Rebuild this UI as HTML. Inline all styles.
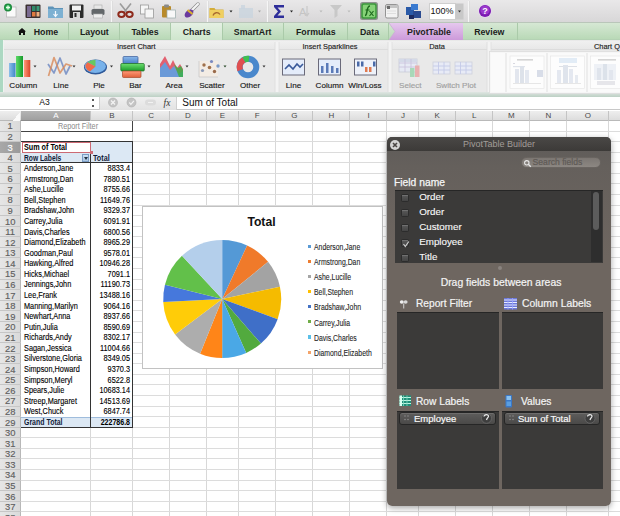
<!DOCTYPE html><html><head><meta charset="utf-8"><style>
*{margin:0;padding:0;box-sizing:border-box}
html,body{width:620px;height:516px;overflow:hidden;background:#fff;font-family:"Liberation Sans", sans-serif;position:relative}
.abs{position:absolute}
.t{position:absolute;white-space:nowrap;line-height:1}
</style></head><body>

<div class="abs" style="left:0px;top:0px;width:620px;height:23px;background:linear-gradient(#e9e8e9,#d8d7d8);border-bottom:1px solid #b9c6b9"></div>
<svg class="abs" style="left:0;top:0" width="620" height="23" viewBox="0 0 620 23">
<!-- new -->
<rect x="6.5" y="7" width="9.5" height="10" fill="#fafafa" stroke="#b8b8b8" stroke-width="0.8"/>
<circle cx="8" cy="7.5" r="4" fill="#1d8a3c"/><circle cx="8" cy="7.5" r="2.6" fill="#2fb35a"/>
<path d="M8 5.5v4M6 7.5h4" stroke="#e8ffe8" stroke-width="1.3"/>
<!-- templates -->
<rect x="25.5" y="4.5" width="15" height="13.5" rx="1" fill="#3a3030"/>
<rect x="27" y="6" width="4" height="11" fill="#7a6a90"/>
<rect x="32" y="6" width="3.5" height="5" fill="#2f8a6a"/><rect x="36.5" y="6" width="3" height="5" fill="#3a9a7a"/>
<rect x="32" y="12" width="3.5" height="4.5" fill="#e07a40"/><rect x="36.5" y="12" width="3" height="4.5" fill="#f0b080"/>
<!-- open -->
<path d="M48 6.5h5l1.5 1.5h8.5v10h-15z" fill="#5e93b8"/>
<rect x="48" y="9" width="15" height="9" fill="#7db0d2"/>
<path d="M55.5 11v5M53.5 14l2 2.5 2-2.5" stroke="#f4f8ff" stroke-width="1.2" fill="none"/>
<!-- save -->
<rect x="69.5" y="4.5" width="14" height="13.5" rx="1" fill="#2b2b2b"/>
<rect x="72" y="5.5" width="9" height="5" fill="#f2f2f2"/>
<rect x="73" y="12" width="7" height="6" fill="#d8d8d8"/><rect x="74.5" y="13" width="2" height="4" fill="#2b2b2b"/>
<!-- print -->
<rect x="94" y="5" width="8" height="4" fill="#e8e8e8" stroke="#aaa" stroke-width=".6"/>
<rect x="91.5" y="9" width="13" height="6" rx="1.5" fill="#63676a"/>
<rect x="93.5" y="14" width="9" height="4" fill="#eee" stroke="#aaa" stroke-width=".6"/>
<line x1="111.5" y1="1" x2="111.5" y2="22" stroke="#f6f6f6" stroke-width="1.2"/><line x1="112.5" y1="1" x2="112.5" y2="22" stroke="#d6d6d6" stroke-width=".6"/>
<!-- cut -->
<path d="M120 3.5l7.5 9.5M131 3.5l-7.5 9.5" stroke="#9c9c9c" stroke-width="1.6"/>
<ellipse cx="121.5" cy="14.3" rx="3.2" ry="2.6" fill="none" stroke="#8e2a1c" stroke-width="2"/>
<ellipse cx="129.5" cy="14.3" rx="3.2" ry="2.6" fill="none" stroke="#8e2a1c" stroke-width="2"/>
<!-- copy -->
<rect x="140.5" y="5" width="8" height="9" fill="#f6f6f6" stroke="#9a9a9a" stroke-width=".8"/>
<rect x="145" y="9" width="8.5" height="9" fill="#f6f6f6" stroke="#9a9a9a" stroke-width=".8"/>
<!-- paste -->
<rect x="162" y="6" width="9" height="11.5" rx="1" fill="#b88a2a"/>
<rect x="164" y="4.5" width="5" height="3" rx="1" fill="#8a8a8a"/>
<rect x="167" y="10" width="8.5" height="8" fill="#f8f8f8" stroke="#9aa" stroke-width=".7"/>
<!-- brush -->
<path d="M192 10l6-6" stroke="#8a8a8a" stroke-width="3.4" stroke-linecap="round"/>
<path d="M192 10l6-6" stroke="#f4f4f4" stroke-width="2.2" stroke-linecap="round"/>
<ellipse cx="189" cy="13.5" rx="5" ry="3.3" transform="rotate(-40 189 13.5)" fill="#6a3a9e"/>
<path d="M187.5 10l5 4" stroke="#d8b030" stroke-width="2.2"/>
<line x1="207.5" y1="1" x2="207.5" y2="22" stroke="#f6f6f6" stroke-width="1.2"/><line x1="208.5" y1="1" x2="208.5" y2="22" stroke="#d6d6d6" stroke-width=".6"/>
<!-- undo -->
<path d="M209.5 8h5l1 1.5h8v8.5h-14z" fill="#d4ad3a"/>
<rect x="209.5" y="10" width="14" height="8" fill="#f0cf60"/>
<path d="M213 15.5c1-3 5-4 7-1" stroke="#a86a30" stroke-width="1.3" fill="none"/>
<path d="M229.5 10.5h3l-1.5 2z" fill="#222"/>
<!-- redo grey -->
<rect x="239" y="8" width="14" height="10" fill="#c9d4de" opacity=".8"/>
<rect x="241" y="5" width="4" height="4" fill="#c9d4de" opacity=".8"/>
<path d="M258 10.5h3l-1.5 2z" fill="#aaa"/>
<line x1="267.5" y1="1" x2="267.5" y2="22" stroke="#f6f6f6" stroke-width="1.2"/><line x1="268.5" y1="1" x2="268.5" y2="22" stroke="#d6d6d6" stroke-width=".6"/>
<!-- sigma -->
<path d="M274 5h10v2.5h-6.5l3.5 4-3.5 4h6.5v2.5h-10v-2l4-4.5-4-4.5z" fill="#2e2e9a"/>
<path d="M290 10.5h3l-1.5 2z" fill="#222"/>
<!-- sort grey -->
<text x="299" y="16" font-size="11" fill="#c4c4c4" font-family="Liberation Sans">A</text>
<path d="M307 6v10M305 13l2 3 2-3" stroke="#c8c8c8" stroke-width="1.2" fill="none"/>
<path d="M319.5 10.5h3l-1.5 2z" fill="#bbb"/>
<!-- filter grey -->
<path d="M330 5h12l-4.5 5v6l-3 2v-8z" fill="#c8c8c8"/>
<path d="M347.5 10.5h3l-1.5 2z" fill="#bbb"/>
<!-- fx -->
<rect x="360" y="2" width="18" height="18" rx="2.5" fill="#8e948e"/>
<rect x="361.3" y="3.3" width="15.4" height="15.4" rx="1.8" fill="#3c9a3c"/>
<rect x="362.8" y="4.8" width="12.4" height="12.4" rx="1.2" fill="#86d278"/>
<path d="M365 15.5c1.5 0 1.5-1.5 2-4.5s1-5 3-5" stroke="#1e6a1e" stroke-width="1.5" fill="none"/>
<path d="M365.5 10h4" stroke="#1e6a1e" stroke-width="1.1"/>
<path d="M369.5 11l4 5M373.5 11l-4 5" stroke="#1e6a1e" stroke-width="1.2"/>
<!-- toolbox -->
<rect x="385.5" y="4.5" width="12.5" height="13.5" rx="1.5" fill="#f2f2f2" stroke="#8a8a8a" stroke-width=".9"/>
<rect x="386" y="5" width="11.5" height="3" fill="#c4c4c4"/>
<rect x="387" y="6" width="3" height="3" fill="#6a6a6a"/>
<path d="M387 11h9M387 13.5h9" stroke="#d0d0d0" stroke-width=".6"/>
<!-- media -->
<rect x="406" y="7" width="8" height="8" fill="#2a5aa8"/>
<rect x="411" y="4" width="7" height="6" fill="#3a7ad0"/>
<rect x="413" y="11" width="8" height="7" fill="#2a4a90"/>
<rect x="409" y="15" width="5" height="4" fill="#1c2a60"/>
<!-- zoom box -->
<rect x="429.5" y="3.5" width="26" height="16" fill="#fff" stroke="#cfcfcf"/>
<rect x="455.5" y="3.5" width="8" height="16" fill="#c8c8c8"/>
<path d="M458 10.5h3l-1.5 2z" fill="#333"/>
<line x1="468.5" y1="1" x2="468.5" y2="22" stroke="#f6f6f6" stroke-width="1.2"/><line x1="469.5" y1="1" x2="469.5" y2="22" stroke="#d6d6d6" stroke-width=".6"/>
<!-- help -->
<circle cx="485" cy="11" r="6.8" fill="#e6d8ee"/>
<circle cx="485" cy="11" r="6" fill="#7a1ab0"/>
<circle cx="485" cy="10" r="4.6" fill="#9a38cc"/>
</svg>
<div class="t" style="left:292.00px;width:300px;text-align:center;top:7.38px;font-size:9px;font-weight:normal;color:#111;">100%</div>
<div class="t" style="left:335.00px;width:300px;text-align:center;top:6.88px;font-size:9px;font-weight:bold;color:#fff;">?</div>
<div class="abs" style="left:0px;top:23px;width:620px;height:17px;background:linear-gradient(#d6e8d4,#b9d9b7);border-bottom:1px solid #b4d2b4"></div>
<div class="abs" style="left:7px;top:23px;width:61.5px;height:17px;border-right:1px solid #aacaa9"></div>
<div class="abs" style="left:68.5px;top:23px;width:51.5px;height:17px;border-right:1px solid #aacaa9"></div>
<div class="abs" style="left:120px;top:23px;width:51px;height:17px;border-right:1px solid #aacaa9"></div>
<div class="abs" style="left:171px;top:23px;width:52px;height:17px;background:linear-gradient(#e4f0e3,#cfe6cd);border-right:1px solid #aacaa9"></div>
<div class="abs" style="left:223px;top:23px;width:61px;height:17px;border-right:1px solid #aacaa9"></div>
<div class="abs" style="left:284px;top:23px;width:64px;height:17px;border-right:1px solid #aacaa9"></div>
<div class="abs" style="left:348px;top:23px;width:41px;height:17px;border-right:1px solid #aacaa9"></div>
<div class="abs" style="left:389px;top:23px;width:74px;height:17px;border-right:1px solid #aacaa9"></div>
<div class="abs" style="left:463px;top:23px;width:54.5px;height:17px;border-right:1px solid #aacaa9"></div>
<svg class="abs" style="left:0;top:23px" width="620" height="17" viewBox="0 23 620 17"><defs><linearGradient id="pp" x1="0" y1="0" x2="0" y2="1"><stop offset="0" stop-color="#e6c8ee"/><stop offset="1" stop-color="#cc9ada"/></linearGradient></defs><path d="M389 23H463V40H389L395 31.5Z" fill="url(#pp)"/><path d="M389 23L395 31.5L389 40" stroke="#c8b0d0" fill="none" stroke-width=".8"/></svg>
<div class="t" style="left:-104.00px;width:300px;text-align:center;top:27.75px;font-size:8.8px;font-weight:bold;color:#1c221c;">Home</div>
<div class="t" style="left:-55.70px;width:300px;text-align:center;top:27.75px;font-size:8.8px;font-weight:bold;color:#1c221c;">Layout</div>
<div class="t" style="left:-5.00px;width:300px;text-align:center;top:27.75px;font-size:8.8px;font-weight:bold;color:#1c221c;">Tables</div>
<div class="t" style="left:46.60px;width:300px;text-align:center;top:27.75px;font-size:8.8px;font-weight:bold;color:#1c221c;">Charts</div>
<div class="t" style="left:102.70px;width:300px;text-align:center;top:27.75px;font-size:8.8px;font-weight:bold;color:#1c221c;">SmartArt</div>
<div class="t" style="left:165.80px;width:300px;text-align:center;top:27.75px;font-size:8.8px;font-weight:bold;color:#1c221c;">Formulas</div>
<div class="t" style="left:219.50px;width:300px;text-align:center;top:27.75px;font-size:8.8px;font-weight:bold;color:#1c221c;">Data</div>
<div class="t" style="left:279.00px;width:300px;text-align:center;top:27.75px;font-size:8.8px;font-weight:bold;color:#1c221c;">PivotTable</div>
<div class="t" style="left:339.30px;width:300px;text-align:center;top:27.75px;font-size:8.8px;font-weight:bold;color:#1c221c;">Review</div>
<svg class="abs" style="left:17px;top:27px" width="10" height="9"><path d="M1 4.5L5 1l4 3.5H8V8H6V6H4v2H2V4.5z" fill="#111"/></svg>
<div class="abs" style="left:0px;top:40px;width:620px;height:57px;background:#e9e9e9"></div>
<div class="abs" style="left:0px;top:40px;width:2.6px;height:57px;background:#acd8c2"></div>
<div class="abs" style="left:2.6px;top:40px;width:1.2px;height:57px;background:#eef4f0"></div>
<div class="abs" style="left:3.8px;top:41px;width:617px;height:9px;background:linear-gradient(#f0f0f0,#e8e8e8);border-bottom:1px solid #dcdcdc"></div>
<div class="abs" style="left:0px;top:92px;width:620px;height:5px;background:linear-gradient(#dfe6e2,#bcd0c4)"></div>
<svg class="abs" style="left:0;top:40px" width="620" height="55" viewBox="0 40 620 55">
<defs>
<linearGradient id="gb" x1="0" x2="1"><stop offset="0" stop-color="#8fc0ea"/><stop offset="1" stop-color="#3f86c8"/></linearGradient>
<linearGradient id="gg" x1="0" x2="1"><stop offset="0" stop-color="#5fdc6a"/><stop offset="1" stop-color="#159a2a"/></linearGradient>
<linearGradient id="go" x1="0" x2="1"><stop offset="0" stop-color="#ff9a78"/><stop offset="1" stop-color="#d8442a"/></linearGradient>
<linearGradient id="gbh" x1="0" y1="0" x2="0" y2="1"><stop offset="0" stop-color="#8ab8ea"/><stop offset="1" stop-color="#4a80c8"/></linearGradient>
<linearGradient id="ggh" x1="0" y1="0" x2="0" y2="1"><stop offset="0" stop-color="#6ee070"/><stop offset="1" stop-color="#1a9a2a"/></linearGradient>
<linearGradient id="goh" x1="0" y1="0" x2="0" y2="1"><stop offset="0" stop-color="#ff9a78"/><stop offset="1" stop-color="#e0603a"/></linearGradient>
</defs>
<!-- column chart -->
<rect x="9" y="63" width="6.5" height="14" fill="url(#gb)"/>
<rect x="16" y="56" width="7" height="21" fill="url(#gg)"/>
<rect x="24" y="60" width="6.3" height="17" fill="url(#go)"/>
<path d="M33.5 65.5h3l-1.5 2z" fill="#333"/>
<!-- line -->
<path d="M48 64L54 73L60 58L66 74L70 66" stroke="#6a86c0" stroke-width="1.7" fill="none" opacity=".8" stroke-linejoin="round"/>
<path d="M48.5 76L54 57.5L60 73L66 64L72 66" stroke="#d88858" stroke-width="1.7" fill="none" opacity=".8" stroke-linejoin="round"/>
<path d="M72.5 65.5h3l-1.5 2z" fill="#333"/>
<!-- pie -->
<ellipse cx="95.5" cy="67" rx="11.5" ry="7.5" fill="#2f5a9a"/>
<ellipse cx="95.3" cy="66.4" rx="10.6" ry="6.6" fill="#78b2ea"/>
<path d="M95.5 66.5L95.5 59.8A10.6 6.6 0 0 0 87.5 62.2Z" fill="#66c860"/>
<path d="M95.5 66.5L87.5 62.2A10.6 6.6 0 0 0 90 71.5Z" fill="#f06a48"/>
<path d="M110 65.5h3l-1.5 2z" fill="#333"/>
<!-- bar -->
<rect x="123" y="56.5" width="15" height="7" rx="1" fill="url(#gbh)" stroke="#3a5a98" stroke-width=".7"/>
<rect x="120.8" y="63.5" width="23.5" height="7.5" rx="1" fill="url(#ggh)" stroke="#1a6a22" stroke-width=".7"/>
<rect x="122.5" y="71" width="18.5" height="6.5" rx="1" fill="url(#goh)" stroke="#a84a2a" stroke-width=".7"/>
<path d="M147.5 65.5h3l-1.5 2z" fill="#333"/>
<!-- area -->
<path d="M160 77V64l5-8 5 10 3-6 4 8 3-4 3 5v8z" fill="#e26070"/>
<path d="M160 77V68l5-6 5 8 4-4 5 8 4-3v6z" fill="#6a9ad8"/>
<path d="M174 64l4 4 3-2 2 4v7h-4z" fill="#38b048" opacity=".85"/>
<path d="M185.5 65.5h3l-1.5 2z" fill="#333"/>
<!-- scatter -->
<rect x="199" y="61" width="19" height="16" fill="#f3ece4"/>
<path d="M199 61v16h19" stroke="#c8c8c8" stroke-width=".8" fill="none"/>
<circle cx="211.5" cy="61.5" r="1.6" fill="#7a8ac0"/><circle cx="204" cy="65" r="1.7" fill="#a0704a"/>
<circle cx="209.5" cy="67.5" r="1.8" fill="#a0704a"/><circle cx="218" cy="66" r="1.7" fill="#7a9ac8"/>
<circle cx="202.5" cy="70.5" r="1.6" fill="#8a9ab8"/><circle cx="214.5" cy="71.5" r="1.7" fill="#9a6a4a"/>
<path d="M223.5 65.5h3l-1.5 2z" fill="#2a4a2a"/>
<!-- donut -->
<circle cx="248" cy="67" r="8.3" fill="none" stroke="#4a88cc" stroke-width="6"/>
<path d="M240.2 70.2A8.3 8.3 0 0 1 244 59.8" stroke="#e05050" stroke-width="6" fill="none"/>
<path d="M244 59.8A8.3 8.3 0 0 1 249 58.8" stroke="#40c050" stroke-width="6" fill="none"/>
<path d="M262.5 65.5h3l-1.5 2z" fill="#333"/>
<rect x="275.0" y="42" width="4" height="50" fill="#f3f3f3"/><line x1="275.0" y1="42" x2="275.0" y2="92" stroke="#dadada" stroke-width=".8"/><line x1="279.0" y1="42" x2="279.0" y2="92" stroke="#dedede" stroke-width=".8"/>
<!-- spark line -->
<rect x="282.5" y="59" width="22" height="16" fill="#e4ecfa" stroke="#6a6a7a" stroke-width="1"/>
<path d="M285 69l4-4 4 4 4-5 3 3 3-3" stroke="#3a5a9a" stroke-width="1.6" fill="none"/>
<!-- spark column -->
<rect x="318.5" y="59" width="22" height="16" fill="#e4ecfa" stroke="#6a6a7a" stroke-width="1"/>
<rect x="321" y="66" width="2.5" height="7" fill="#5a7ab8"/><rect x="326" y="63" width="2.5" height="10" fill="#5a7ab8"/>
<rect x="331" y="66" width="2.5" height="7" fill="#5a7ab8"/><rect x="336" y="68" width="2.5" height="5" fill="#5a7ab8"/>
<!-- win/loss -->
<rect x="354.5" y="59" width="22" height="16" fill="#eef2fa" stroke="#6a6a7a" stroke-width="1"/>
<rect x="357" y="61.5" width="2.5" height="5" fill="#4a6aa8"/><rect x="361" y="61.5" width="2.5" height="5" fill="#4a6aa8"/>
<rect x="365" y="67" width="2.5" height="5" fill="#e07a50"/><rect x="369" y="67" width="2.5" height="5" fill="#e07a50"/>
<rect x="373" y="61.5" width="2.5" height="5" fill="#4a6aa8"/>
<rect x="388.0" y="42" width="4" height="50" fill="#f3f3f3"/><line x1="388.0" y1="42" x2="388.0" y2="92" stroke="#dadada" stroke-width=".8"/><line x1="392.0" y1="42" x2="392.0" y2="92" stroke="#dedede" stroke-width=".8"/>
<!-- select (faded) -->
<rect x="399" y="59" width="18" height="13" fill="#e6eaf4" stroke="#c8ccd8" stroke-width=".8"/>
<rect x="399" y="59" width="18" height="3" fill="#d4dae8"/>
<path d="M399 63h18M399 67h18M405 59v13M411 59v13" stroke="#c8c0dc" stroke-width=".8"/>
<rect x="410" y="68" width="4.5" height="9" fill="#a8d8b8"/><rect x="415" y="65.5" width="4.5" height="11.5" fill="#e8b0b0"/>
<!-- switch plot (faded) -->
<rect x="433" y="62" width="17" height="12" fill="#e8ebf6" stroke="#cdd0dc" stroke-width=".8"/>
<path d="M433 66h17M433 70h17M438.5 62v12M444 62v12" stroke="#c4cae8" stroke-width=".9"/>
<rect x="455" y="62" width="17" height="12" fill="#e8ebf6" stroke="#cdd0dc" stroke-width=".8"/>
<path d="M455 66h17M455 70h17M460.5 62v12M466 62v12" stroke="#c4cae8" stroke-width=".9"/>
<rect x="487.0" y="42" width="4" height="50" fill="#f3f3f3"/><line x1="487.0" y1="42" x2="487.0" y2="92" stroke="#dadada" stroke-width=".8"/><line x1="491.0" y1="42" x2="491.0" y2="92" stroke="#dedede" stroke-width=".8"/>
<!-- quick layouts gallery -->
<rect x="489.5" y="51.5" width="131" height="42" fill="#f6f6f6" stroke="#dcdcdc" stroke-width=".8"/>
<rect x="491" y="53" width="129" height="39" fill="#fafafa"/>
<line x1="506" y1="53" x2="506" y2="92" stroke="#e8e8e8" stroke-width="1.5"/>
<line x1="547" y1="53" x2="547" y2="92" stroke="#e8e8e8" stroke-width="1.5"/>
<line x1="587" y1="53" x2="587" y2="92" stroke="#e8e8e8" stroke-width="1.5"/>
<g>
<rect x="510" y="56" width="34" height="32.5" fill="#fdfdfd" stroke="#e4e4e4" stroke-width=".6"/>
<rect x="517" y="59" width="16" height="1.6" fill="#d4d4d4"/>
<rect x="513" y="63" width="2" height="1" fill="#d8d8e0"/><rect x="513" y="66" width="12" height="1.2" fill="#dfe3ea"/>
<rect x="515" y="69" width="4" height="14" fill="#e2e6ee"/><rect x="520" y="66" width="4" height="17" fill="#dde2ea"/><rect x="525" y="70" width="4" height="13" fill="#e4e8f0"/>
<rect x="537" y="70" width="6" height="7" fill="#d8dde8"/>
<rect x="513" y="83" width="28" height=".8" fill="#e0e0e0"/>
</g>
<g>
<rect x="550.5" y="56" width="34" height="32.5" fill="#fdfdfd" stroke="#e4e4e4" stroke-width=".6"/>
<rect x="559" y="58" width="18" height="5" fill="#e2ecf6"/>
<rect x="559" y="66" width="18" height="1" fill="#dde0e6"/>
<rect x="557" y="70" width="4" height="13" fill="#e4e8f0"/><rect x="563" y="65" width="5" height="18" fill="#dfe4ec"/><rect x="569" y="69" width="4" height="14" fill="#e4e8f0"/><rect x="575" y="75" width="3" height="8" fill="#e6eaf0"/>
<rect x="555" y="83" width="26" height=".8" fill="#e0e0e0"/>
</g>
<g>
<rect x="590.5" y="56" width="34" height="32.5" fill="#fdfdfd" stroke="#e4e4e4" stroke-width=".6"/>
<rect x="598" y="59" width="18" height="1.6" fill="#d4d4d4"/>
<rect x="594" y="64" width="22" height="16" fill="#eef1f6"/>
<rect x="597" y="68" width="4" height="12" fill="#dfe4ec"/><rect x="603" y="64" width="4" height="16" fill="#dce2ea"/><rect x="609" y="70" width="4" height="10" fill="#e2e6ee"/>
<rect x="597" y="81" width="18" height="4" fill="#e6e6ea"/>
</g>
</svg>
<div class="t" style="left:-13.80px;width:300px;text-align:center;top:42.94px;font-size:7.4px;font-weight:normal;color:#222;-webkit-text-stroke:0.15px #222">Insert Chart</div>
<div class="t" style="left:180.00px;width:300px;text-align:center;top:42.94px;font-size:7.4px;font-weight:normal;color:#222;-webkit-text-stroke:0.15px #222">Insert Sparklines</div>
<div class="t" style="left:287.00px;width:300px;text-align:center;top:42.94px;font-size:7.4px;font-weight:normal;color:#222;-webkit-text-stroke:0.15px #222">Data</div>
<div class="t" style="left:594.00px;top:42.94px;font-size:7.4px;font-weight:normal;color:#222;-webkit-text-stroke:0.15px #222">Chart Q</div>
<div class="t" style="left:-126.70px;width:300px;text-align:center;top:82.14px;font-size:8.1px;font-weight:normal;color:#1a1a1a;-webkit-text-stroke:0.15px #1a1a1a">Column</div>
<div class="t" style="left:-89.00px;width:300px;text-align:center;top:82.14px;font-size:8.1px;font-weight:normal;color:#1a1a1a;-webkit-text-stroke:0.15px #1a1a1a">Line</div>
<div class="t" style="left:-51.00px;width:300px;text-align:center;top:82.14px;font-size:8.1px;font-weight:normal;color:#1a1a1a;-webkit-text-stroke:0.15px #1a1a1a">Pie</div>
<div class="t" style="left:-14.50px;width:300px;text-align:center;top:82.14px;font-size:8.1px;font-weight:normal;color:#1a1a1a;-webkit-text-stroke:0.15px #1a1a1a">Bar</div>
<div class="t" style="left:24.00px;width:300px;text-align:center;top:82.14px;font-size:8.1px;font-weight:normal;color:#1a1a1a;-webkit-text-stroke:0.15px #1a1a1a">Area</div>
<div class="t" style="left:62.00px;width:300px;text-align:center;top:82.14px;font-size:8.1px;font-weight:normal;color:#1a1a1a;-webkit-text-stroke:0.15px #1a1a1a">Scatter</div>
<div class="t" style="left:100.00px;width:300px;text-align:center;top:82.14px;font-size:8.1px;font-weight:normal;color:#1a1a1a;-webkit-text-stroke:0.15px #1a1a1a">Other</div>
<div class="t" style="left:143.50px;width:300px;text-align:center;top:82.14px;font-size:8.1px;font-weight:normal;color:#1a1a1a;-webkit-text-stroke:0.15px #1a1a1a">Line</div>
<div class="t" style="left:179.50px;width:300px;text-align:center;top:82.14px;font-size:8.1px;font-weight:normal;color:#1a1a1a;-webkit-text-stroke:0.15px #1a1a1a">Column</div>
<div class="t" style="left:215.00px;width:300px;text-align:center;top:82.14px;font-size:8.1px;font-weight:normal;color:#1a1a1a;-webkit-text-stroke:0.15px #1a1a1a">Win/Loss</div>
<div class="t" style="left:260.30px;width:300px;text-align:center;top:82.14px;font-size:8.1px;font-weight:normal;color:#a0a0a0;-webkit-text-stroke:0.15px #a0a0a0">Select</div>
<div class="t" style="left:306.00px;width:300px;text-align:center;top:82.14px;font-size:8.1px;font-weight:normal;color:#a0a0a0;-webkit-text-stroke:0.15px #a0a0a0">Switch Plot</div>
<div class="abs" style="left:0px;top:97px;width:620px;height:13px;background:#fff;border-bottom:1px solid #c8c8c8"></div>
<div class="abs" style="left:99px;top:97px;width:78px;height:13px;background:linear-gradient(#f0f0f0,#e2e2e2);border-left:1px solid #d0d0d0;border-right:1px solid #d0d0d0"></div>
<div class="abs" style="left:91.7px;top:99px;width:2.4px;height:2.4px;border-radius:50%;background:#222"></div>
<div class="abs" style="left:91.7px;top:104.5px;width:2.4px;height:2.4px;border-radius:50%;background:#222"></div>
<svg class="abs" style="left:0;top:95px" width="620" height="15" viewBox="0 95 620 15">
<circle cx="113" cy="102.5" r="4.5" fill="#c4c4c4" stroke="#b0b0b0" stroke-width=".6"/><path d="M111 100.5l4 4M115 100.5l-4 4" stroke="#f4f4f4" stroke-width="1.2"/>
<circle cx="131.5" cy="102.5" r="4.5" fill="#c4c4c4" stroke="#b0b0b0" stroke-width=".6"/><path d="M129.3 102.5l1.6 1.8 3-3.4" stroke="#f4f4f4" stroke-width="1.2" fill="none"/>
<rect x="145" y="99.5" width="11" height="6" rx="3" fill="#dcdcdc"/><path d="M148 102.5h5" stroke="#f2f2f2" stroke-width="1"/>
<text x="163.5" y="106" font-size="9.5" font-style="italic" fill="#333" font-family="Liberation Serif">fx</text>
</svg>
<div class="t" style="left:-105.50px;width:300px;text-align:center;top:98.12px;font-size:8.6px;font-weight:normal;color:#111;">A3</div>
<div class="t" style="left:182.30px;top:97.53px;font-size:10px;font-weight:normal;color:#111;">Sum of Total</div>
<div class="abs" style="left:0px;top:110.8px;width:620px;height:10.200000000000003px;background:linear-gradient(#eeeeee,#dddddd);border-bottom:1px solid #b9b9b9"></div>
<div class="abs" style="left:21px;top:110.8px;width:70px;height:10.200000000000003px;background:linear-gradient(#b4b4b4,#9f9f9f);border-bottom:1px solid #8a8a8a"></div>
<div class="abs" style="left:12px;top:112.8px;width:8px;height:8px;background:linear-gradient(135deg,transparent 50%,#fafafa 50%)"></div>
<div class="abs" style="left:90px;top:110.8px;width:1px;height:10.200000000000003px;background:#c4c4c4"></div>
<div class="abs" style="left:90px;top:121px;width:1px;height:395px;background:#d8d8d8"></div>
<div class="t" style="left:-94.00px;width:300px;text-align:center;top:111.73px;font-size:8px;font-weight:normal;color:#fff;">A</div>
<div class="abs" style="left:132px;top:110.8px;width:1px;height:10.200000000000003px;background:#c4c4c4"></div>
<div class="abs" style="left:132px;top:121px;width:1px;height:395px;background:#d8d8d8"></div>
<div class="t" style="left:-38.00px;width:300px;text-align:center;top:111.73px;font-size:8px;font-weight:normal;color:#4a4a4a;">B</div>
<div class="abs" style="left:168.5px;top:110.8px;width:1px;height:10.200000000000003px;background:#c4c4c4"></div>
<div class="abs" style="left:168.5px;top:121px;width:1px;height:395px;background:#d8d8d8"></div>
<div class="t" style="left:1.25px;width:300px;text-align:center;top:111.73px;font-size:8px;font-weight:normal;color:#4a4a4a;">C</div>
<div class="abs" style="left:205.5px;top:110.8px;width:1px;height:10.200000000000003px;background:#c4c4c4"></div>
<div class="abs" style="left:205.5px;top:121px;width:1px;height:395px;background:#d8d8d8"></div>
<div class="t" style="left:38.00px;width:300px;text-align:center;top:111.73px;font-size:8px;font-weight:normal;color:#4a4a4a;">D</div>
<div class="abs" style="left:237.5px;top:110.8px;width:1px;height:10.200000000000003px;background:#c4c4c4"></div>
<div class="abs" style="left:237.5px;top:121px;width:1px;height:395px;background:#d8d8d8"></div>
<div class="t" style="left:72.50px;width:300px;text-align:center;top:111.73px;font-size:8px;font-weight:normal;color:#4a4a4a;">E</div>
<div class="abs" style="left:274.8px;top:110.8px;width:1px;height:10.200000000000003px;background:#c4c4c4"></div>
<div class="abs" style="left:274.8px;top:121px;width:1px;height:395px;background:#d8d8d8"></div>
<div class="t" style="left:107.15px;width:300px;text-align:center;top:111.73px;font-size:8px;font-weight:normal;color:#4a4a4a;">F</div>
<div class="abs" style="left:311.9px;top:110.8px;width:1px;height:10.200000000000003px;background:#c4c4c4"></div>
<div class="abs" style="left:311.9px;top:121px;width:1px;height:395px;background:#d8d8d8"></div>
<div class="t" style="left:144.35px;width:300px;text-align:center;top:111.73px;font-size:8px;font-weight:normal;color:#4a4a4a;">G</div>
<div class="abs" style="left:349px;top:110.8px;width:1px;height:10.200000000000003px;background:#c4c4c4"></div>
<div class="abs" style="left:349px;top:121px;width:1px;height:395px;background:#d8d8d8"></div>
<div class="t" style="left:181.45px;width:300px;text-align:center;top:111.73px;font-size:8px;font-weight:normal;color:#4a4a4a;">H</div>
<div class="abs" style="left:386px;top:110.8px;width:1px;height:10.200000000000003px;background:#c4c4c4"></div>
<div class="abs" style="left:386px;top:121px;width:1px;height:395px;background:#d8d8d8"></div>
<div class="t" style="left:218.50px;width:300px;text-align:center;top:111.73px;font-size:8px;font-weight:normal;color:#4a4a4a;">I</div>
<div class="abs" style="left:418px;top:110.8px;width:1px;height:10.200000000000003px;background:#c4c4c4"></div>
<div class="abs" style="left:418px;top:121px;width:1px;height:395px;background:#d8d8d8"></div>
<div class="t" style="left:253.00px;width:300px;text-align:center;top:111.73px;font-size:8px;font-weight:normal;color:#4a4a4a;">J</div>
<div class="abs" style="left:454.5px;top:110.8px;width:1px;height:10.200000000000003px;background:#c4c4c4"></div>
<div class="abs" style="left:454.5px;top:121px;width:1px;height:395px;background:#d8d8d8"></div>
<div class="t" style="left:287.25px;width:300px;text-align:center;top:111.73px;font-size:8px;font-weight:normal;color:#4a4a4a;">K</div>
<div class="abs" style="left:491.8px;top:110.8px;width:1px;height:10.200000000000003px;background:#c4c4c4"></div>
<div class="abs" style="left:491.8px;top:121px;width:1px;height:395px;background:#d8d8d8"></div>
<div class="t" style="left:324.15px;width:300px;text-align:center;top:111.73px;font-size:8px;font-weight:normal;color:#4a4a4a;">L</div>
<div class="abs" style="left:529px;top:110.8px;width:1px;height:10.200000000000003px;background:#c4c4c4"></div>
<div class="abs" style="left:529px;top:121px;width:1px;height:395px;background:#d8d8d8"></div>
<div class="t" style="left:361.40px;width:300px;text-align:center;top:111.73px;font-size:8px;font-weight:normal;color:#4a4a4a;">M</div>
<div class="abs" style="left:566px;top:110.8px;width:1px;height:10.200000000000003px;background:#c4c4c4"></div>
<div class="abs" style="left:566px;top:121px;width:1px;height:395px;background:#d8d8d8"></div>
<div class="t" style="left:398.50px;width:300px;text-align:center;top:111.73px;font-size:8px;font-weight:normal;color:#4a4a4a;">N</div>
<div class="abs" style="left:607.5px;top:110.8px;width:1px;height:10.200000000000003px;background:#c4c4c4"></div>
<div class="abs" style="left:607.5px;top:121px;width:1px;height:395px;background:#d8d8d8"></div>
<div class="t" style="left:437.75px;width:300px;text-align:center;top:111.73px;font-size:8px;font-weight:normal;color:#4a4a4a;">O</div>
<div class="abs" style="left:649px;top:110.8px;width:1px;height:10.200000000000003px;background:#c4c4c4"></div>
<div class="abs" style="left:649px;top:121px;width:1px;height:395px;background:#d8d8d8"></div>
<div class="t" style="left:479.25px;width:300px;text-align:center;top:111.73px;font-size:8px;font-weight:normal;color:#4a4a4a;">P</div>
<div class="abs" style="left:0px;top:121px;width:21px;height:395px;background:linear-gradient(90deg,#e6e6e6,#dadada);border-right:1px solid #b8b8b8"></div>
<div class="abs" style="left:21px;top:130.57px;width:600px;height:1px;background:#dcdcdc"></div>
<div class="abs" style="left:0px;top:130.57px;width:21px;height:1px;background:#c6c6c6"></div>
<div class="t" style="left:-139.80px;width:300px;text-align:center;top:121.44px;font-size:9.4px;font-weight:normal;color:#606060;-webkit-text-stroke:0.15px #606060">1</div>
<div class="abs" style="left:21px;top:141.15px;width:600px;height:1px;background:#dcdcdc"></div>
<div class="abs" style="left:0px;top:141.15px;width:21px;height:1px;background:#c6c6c6"></div>
<div class="t" style="left:-139.80px;width:300px;text-align:center;top:132.02px;font-size:9.4px;font-weight:normal;color:#606060;-webkit-text-stroke:0.15px #606060">2</div>
<div class="abs" style="left:21px;top:151.72px;width:600px;height:1px;background:#dcdcdc"></div>
<div class="abs" style="left:0px;top:151.72px;width:21px;height:1px;background:#c6c6c6"></div>
<div class="abs" style="left:0px;top:142.15px;width:20px;height:10.575px;background:linear-gradient(90deg,#a8a8a8,#9a9a9a)"></div>
<div class="t" style="left:-139.80px;width:300px;text-align:center;top:142.59px;font-size:9.4px;font-weight:normal;color:#fff;-webkit-text-stroke:0.15px #fff">3</div>
<div class="abs" style="left:21px;top:162.30px;width:600px;height:1px;background:#dcdcdc"></div>
<div class="abs" style="left:0px;top:162.30px;width:21px;height:1px;background:#c6c6c6"></div>
<div class="t" style="left:-139.80px;width:300px;text-align:center;top:153.17px;font-size:9.4px;font-weight:normal;color:#606060;-webkit-text-stroke:0.15px #606060">4</div>
<div class="abs" style="left:21px;top:172.88px;width:600px;height:1px;background:#dcdcdc"></div>
<div class="abs" style="left:0px;top:172.88px;width:21px;height:1px;background:#c6c6c6"></div>
<div class="t" style="left:-139.80px;width:300px;text-align:center;top:163.74px;font-size:9.4px;font-weight:normal;color:#606060;-webkit-text-stroke:0.15px #606060">5</div>
<div class="abs" style="left:21px;top:183.45px;width:600px;height:1px;background:#dcdcdc"></div>
<div class="abs" style="left:0px;top:183.45px;width:21px;height:1px;background:#c6c6c6"></div>
<div class="t" style="left:-139.80px;width:300px;text-align:center;top:174.32px;font-size:9.4px;font-weight:normal;color:#606060;-webkit-text-stroke:0.15px #606060">6</div>
<div class="abs" style="left:21px;top:194.02px;width:600px;height:1px;background:#dcdcdc"></div>
<div class="abs" style="left:0px;top:194.02px;width:21px;height:1px;background:#c6c6c6"></div>
<div class="t" style="left:-139.80px;width:300px;text-align:center;top:184.89px;font-size:9.4px;font-weight:normal;color:#606060;-webkit-text-stroke:0.15px #606060">7</div>
<div class="abs" style="left:21px;top:204.60px;width:600px;height:1px;background:#dcdcdc"></div>
<div class="abs" style="left:0px;top:204.60px;width:21px;height:1px;background:#c6c6c6"></div>
<div class="t" style="left:-139.80px;width:300px;text-align:center;top:195.47px;font-size:9.4px;font-weight:normal;color:#606060;-webkit-text-stroke:0.15px #606060">8</div>
<div class="abs" style="left:21px;top:215.17px;width:600px;height:1px;background:#dcdcdc"></div>
<div class="abs" style="left:0px;top:215.17px;width:21px;height:1px;background:#c6c6c6"></div>
<div class="t" style="left:-139.80px;width:300px;text-align:center;top:206.04px;font-size:9.4px;font-weight:normal;color:#606060;-webkit-text-stroke:0.15px #606060">9</div>
<div class="abs" style="left:21px;top:225.75px;width:600px;height:1px;background:#dcdcdc"></div>
<div class="abs" style="left:0px;top:225.75px;width:21px;height:1px;background:#c6c6c6"></div>
<div class="t" style="left:-139.80px;width:300px;text-align:center;top:216.62px;font-size:9.4px;font-weight:normal;color:#606060;-webkit-text-stroke:0.15px #606060">10</div>
<div class="abs" style="left:21px;top:236.32px;width:600px;height:1px;background:#dcdcdc"></div>
<div class="abs" style="left:0px;top:236.32px;width:21px;height:1px;background:#c6c6c6"></div>
<div class="t" style="left:-139.80px;width:300px;text-align:center;top:227.19px;font-size:9.4px;font-weight:normal;color:#606060;-webkit-text-stroke:0.15px #606060">11</div>
<div class="abs" style="left:21px;top:246.90px;width:600px;height:1px;background:#dcdcdc"></div>
<div class="abs" style="left:0px;top:246.90px;width:21px;height:1px;background:#c6c6c6"></div>
<div class="t" style="left:-139.80px;width:300px;text-align:center;top:237.77px;font-size:9.4px;font-weight:normal;color:#606060;-webkit-text-stroke:0.15px #606060">12</div>
<div class="abs" style="left:21px;top:257.47px;width:600px;height:1px;background:#dcdcdc"></div>
<div class="abs" style="left:0px;top:257.47px;width:21px;height:1px;background:#c6c6c6"></div>
<div class="t" style="left:-139.80px;width:300px;text-align:center;top:248.34px;font-size:9.4px;font-weight:normal;color:#606060;-webkit-text-stroke:0.15px #606060">13</div>
<div class="abs" style="left:21px;top:268.05px;width:600px;height:1px;background:#dcdcdc"></div>
<div class="abs" style="left:0px;top:268.05px;width:21px;height:1px;background:#c6c6c6"></div>
<div class="t" style="left:-139.80px;width:300px;text-align:center;top:258.92px;font-size:9.4px;font-weight:normal;color:#606060;-webkit-text-stroke:0.15px #606060">14</div>
<div class="abs" style="left:21px;top:278.62px;width:600px;height:1px;background:#dcdcdc"></div>
<div class="abs" style="left:0px;top:278.62px;width:21px;height:1px;background:#c6c6c6"></div>
<div class="t" style="left:-139.80px;width:300px;text-align:center;top:269.49px;font-size:9.4px;font-weight:normal;color:#606060;-webkit-text-stroke:0.15px #606060">15</div>
<div class="abs" style="left:21px;top:289.20px;width:600px;height:1px;background:#dcdcdc"></div>
<div class="abs" style="left:0px;top:289.20px;width:21px;height:1px;background:#c6c6c6"></div>
<div class="t" style="left:-139.80px;width:300px;text-align:center;top:280.07px;font-size:9.4px;font-weight:normal;color:#606060;-webkit-text-stroke:0.15px #606060">16</div>
<div class="abs" style="left:21px;top:299.77px;width:600px;height:1px;background:#dcdcdc"></div>
<div class="abs" style="left:0px;top:299.77px;width:21px;height:1px;background:#c6c6c6"></div>
<div class="t" style="left:-139.80px;width:300px;text-align:center;top:290.64px;font-size:9.4px;font-weight:normal;color:#606060;-webkit-text-stroke:0.15px #606060">17</div>
<div class="abs" style="left:21px;top:310.35px;width:600px;height:1px;background:#dcdcdc"></div>
<div class="abs" style="left:0px;top:310.35px;width:21px;height:1px;background:#c6c6c6"></div>
<div class="t" style="left:-139.80px;width:300px;text-align:center;top:301.22px;font-size:9.4px;font-weight:normal;color:#606060;-webkit-text-stroke:0.15px #606060">18</div>
<div class="abs" style="left:21px;top:320.93px;width:600px;height:1px;background:#dcdcdc"></div>
<div class="abs" style="left:0px;top:320.93px;width:21px;height:1px;background:#c6c6c6"></div>
<div class="t" style="left:-139.80px;width:300px;text-align:center;top:311.79px;font-size:9.4px;font-weight:normal;color:#606060;-webkit-text-stroke:0.15px #606060">19</div>
<div class="abs" style="left:21px;top:331.50px;width:600px;height:1px;background:#dcdcdc"></div>
<div class="abs" style="left:0px;top:331.50px;width:21px;height:1px;background:#c6c6c6"></div>
<div class="t" style="left:-139.80px;width:300px;text-align:center;top:322.37px;font-size:9.4px;font-weight:normal;color:#606060;-webkit-text-stroke:0.15px #606060">20</div>
<div class="abs" style="left:21px;top:342.07px;width:600px;height:1px;background:#dcdcdc"></div>
<div class="abs" style="left:0px;top:342.07px;width:21px;height:1px;background:#c6c6c6"></div>
<div class="t" style="left:-139.80px;width:300px;text-align:center;top:332.94px;font-size:9.4px;font-weight:normal;color:#606060;-webkit-text-stroke:0.15px #606060">21</div>
<div class="abs" style="left:21px;top:352.65px;width:600px;height:1px;background:#dcdcdc"></div>
<div class="abs" style="left:0px;top:352.65px;width:21px;height:1px;background:#c6c6c6"></div>
<div class="t" style="left:-139.80px;width:300px;text-align:center;top:343.52px;font-size:9.4px;font-weight:normal;color:#606060;-webkit-text-stroke:0.15px #606060">22</div>
<div class="abs" style="left:21px;top:363.22px;width:600px;height:1px;background:#dcdcdc"></div>
<div class="abs" style="left:0px;top:363.22px;width:21px;height:1px;background:#c6c6c6"></div>
<div class="t" style="left:-139.80px;width:300px;text-align:center;top:354.09px;font-size:9.4px;font-weight:normal;color:#606060;-webkit-text-stroke:0.15px #606060">23</div>
<div class="abs" style="left:21px;top:373.80px;width:600px;height:1px;background:#dcdcdc"></div>
<div class="abs" style="left:0px;top:373.80px;width:21px;height:1px;background:#c6c6c6"></div>
<div class="t" style="left:-139.80px;width:300px;text-align:center;top:364.67px;font-size:9.4px;font-weight:normal;color:#606060;-webkit-text-stroke:0.15px #606060">24</div>
<div class="abs" style="left:21px;top:384.37px;width:600px;height:1px;background:#dcdcdc"></div>
<div class="abs" style="left:0px;top:384.37px;width:21px;height:1px;background:#c6c6c6"></div>
<div class="t" style="left:-139.80px;width:300px;text-align:center;top:375.24px;font-size:9.4px;font-weight:normal;color:#606060;-webkit-text-stroke:0.15px #606060">25</div>
<div class="abs" style="left:21px;top:394.95px;width:600px;height:1px;background:#dcdcdc"></div>
<div class="abs" style="left:0px;top:394.95px;width:21px;height:1px;background:#c6c6c6"></div>
<div class="t" style="left:-139.80px;width:300px;text-align:center;top:385.82px;font-size:9.4px;font-weight:normal;color:#606060;-webkit-text-stroke:0.15px #606060">26</div>
<div class="abs" style="left:21px;top:405.52px;width:600px;height:1px;background:#dcdcdc"></div>
<div class="abs" style="left:0px;top:405.52px;width:21px;height:1px;background:#c6c6c6"></div>
<div class="t" style="left:-139.80px;width:300px;text-align:center;top:396.39px;font-size:9.4px;font-weight:normal;color:#606060;-webkit-text-stroke:0.15px #606060">27</div>
<div class="abs" style="left:21px;top:416.10px;width:600px;height:1px;background:#dcdcdc"></div>
<div class="abs" style="left:0px;top:416.10px;width:21px;height:1px;background:#c6c6c6"></div>
<div class="t" style="left:-139.80px;width:300px;text-align:center;top:406.97px;font-size:9.4px;font-weight:normal;color:#606060;-webkit-text-stroke:0.15px #606060">28</div>
<div class="abs" style="left:21px;top:426.67px;width:600px;height:1px;background:#dcdcdc"></div>
<div class="abs" style="left:0px;top:426.67px;width:21px;height:1px;background:#c6c6c6"></div>
<div class="t" style="left:-139.80px;width:300px;text-align:center;top:417.54px;font-size:9.4px;font-weight:normal;color:#606060;-webkit-text-stroke:0.15px #606060">29</div>
<div class="abs" style="left:21px;top:437.25px;width:600px;height:1px;background:#dcdcdc"></div>
<div class="abs" style="left:0px;top:437.25px;width:21px;height:1px;background:#c6c6c6"></div>
<div class="t" style="left:-139.80px;width:300px;text-align:center;top:428.12px;font-size:9.4px;font-weight:normal;color:#606060;-webkit-text-stroke:0.15px #606060">30</div>
<div class="abs" style="left:21px;top:447.82px;width:600px;height:1px;background:#dcdcdc"></div>
<div class="abs" style="left:0px;top:447.82px;width:21px;height:1px;background:#c6c6c6"></div>
<div class="t" style="left:-139.80px;width:300px;text-align:center;top:438.69px;font-size:9.4px;font-weight:normal;color:#606060;-webkit-text-stroke:0.15px #606060">31</div>
<div class="abs" style="left:21px;top:458.40px;width:600px;height:1px;background:#dcdcdc"></div>
<div class="abs" style="left:0px;top:458.40px;width:21px;height:1px;background:#c6c6c6"></div>
<div class="t" style="left:-139.80px;width:300px;text-align:center;top:449.27px;font-size:9.4px;font-weight:normal;color:#606060;-webkit-text-stroke:0.15px #606060">32</div>
<div class="abs" style="left:21px;top:468.97px;width:600px;height:1px;background:#dcdcdc"></div>
<div class="abs" style="left:0px;top:468.97px;width:21px;height:1px;background:#c6c6c6"></div>
<div class="t" style="left:-139.80px;width:300px;text-align:center;top:459.84px;font-size:9.4px;font-weight:normal;color:#606060;-webkit-text-stroke:0.15px #606060">33</div>
<div class="abs" style="left:21px;top:479.55px;width:600px;height:1px;background:#dcdcdc"></div>
<div class="abs" style="left:0px;top:479.55px;width:21px;height:1px;background:#c6c6c6"></div>
<div class="t" style="left:-139.80px;width:300px;text-align:center;top:470.42px;font-size:9.4px;font-weight:normal;color:#606060;-webkit-text-stroke:0.15px #606060">34</div>
<div class="abs" style="left:21px;top:490.12px;width:600px;height:1px;background:#dcdcdc"></div>
<div class="abs" style="left:0px;top:490.12px;width:21px;height:1px;background:#c6c6c6"></div>
<div class="t" style="left:-139.80px;width:300px;text-align:center;top:480.99px;font-size:9.4px;font-weight:normal;color:#606060;-webkit-text-stroke:0.15px #606060">35</div>
<div class="abs" style="left:21px;top:500.70px;width:600px;height:1px;background:#dcdcdc"></div>
<div class="abs" style="left:0px;top:500.70px;width:21px;height:1px;background:#c6c6c6"></div>
<div class="t" style="left:-139.80px;width:300px;text-align:center;top:491.57px;font-size:9.4px;font-weight:normal;color:#606060;-webkit-text-stroke:0.15px #606060">36</div>
<div class="abs" style="left:21px;top:511.27px;width:600px;height:1px;background:#dcdcdc"></div>
<div class="abs" style="left:0px;top:511.27px;width:21px;height:1px;background:#c6c6c6"></div>
<div class="t" style="left:-139.80px;width:300px;text-align:center;top:502.14px;font-size:9.4px;font-weight:normal;color:#606060;-webkit-text-stroke:0.15px #606060">37</div>
<div class="abs" style="left:21px;top:521.85px;width:600px;height:1px;background:#dcdcdc"></div>
<div class="abs" style="left:0px;top:521.85px;width:21px;height:1px;background:#c6c6c6"></div>
<div class="t" style="left:-139.80px;width:300px;text-align:center;top:512.72px;font-size:9.4px;font-weight:normal;color:#606060;-webkit-text-stroke:0.15px #606060">38</div>
<div class="abs" style="left:21px;top:532.42px;width:600px;height:1px;background:#dcdcdc"></div>
<div class="abs" style="left:0px;top:532.42px;width:21px;height:1px;background:#c6c6c6"></div>
<div class="t" style="left:-139.80px;width:300px;text-align:center;top:523.29px;font-size:9.4px;font-weight:normal;color:#606060;-webkit-text-stroke:0.15px #606060">39</div>
<div class="abs" style="left:21px;top:121.0px;width:111px;height:305.67499999999995px;background:#fff"></div>
<div class="t" style="left:-72.50px;width:300px;text-align:center;top:121.62px;font-size:8.6px;font-weight:normal;color:#8a8a8a;transform:scaleX(0.85);transform-origin:center center;">Report Filter</div>
<div class="abs" style="left:21px;top:130.57px;width:112px;height:1px;background:#444"></div>
<div class="abs" style="left:132px;top:121.0px;width:1px;height:10.575px;background:#444"></div>
<div class="abs" style="left:91px;top:142.15px;width:41px;height:21.15px;background:#dce8f4"></div>
<div class="abs" style="left:21px;top:152.72px;width:70px;height:10.57px;background:#dce8f4"></div>
<div class="abs" style="left:21px;top:417.10px;width:111px;height:10.57px;background:#dce8f4"></div>
<div class="abs" style="left:21px;top:141.15px;width:112px;height:1.2px;background:#333"></div>
<div class="abs" style="left:21px;top:162.30px;width:112px;height:1.2px;background:#333"></div>
<div class="abs" style="left:21px;top:426.67px;width:112px;height:1.2px;background:#333"></div>
<div class="abs" style="left:21px;top:416.60px;width:111px;height:1px;background:#9fbcdc"></div>
<div class="abs" style="left:90px;top:142.15px;width:1.2px;height:285.52px;background:#333"></div>
<div class="abs" style="left:132px;top:142.15px;width:1.2px;height:285.52px;background:#333"></div>
<div class="abs" style="left:22px;top:141.55px;width:69px;height:10.97px;border:1.2px solid #cc6a74"></div>
<div class="abs" style="left:89.5px;top:150.72px;width:3px;height:3px;background:#cc6a74"></div>
<div class="t" style="left:23.80px;top:142.94px;font-size:8.4px;font-weight:bold;color:#000;transform:scaleX(0.86);transform-origin:left center;">Sum of Total</div>
<div class="t" style="left:23.80px;top:153.51px;font-size:8.4px;font-weight:bold;color:#102038;transform:scaleX(0.8);transform-origin:left center;">Row Labels</div>
<div class="abs" style="left:82px;top:153.72px;width:7px;height:8px;background:linear-gradient(#cfe0f2,#a8c4e2);border:1px solid #7a9cc4"></div>
<div class="abs" style="left:83.5px;top:156.72px;width:0;height:0;border-left:2px solid transparent;border-right:2px solid transparent;border-top:3px solid #234"></div>
<div class="t" style="left:93.00px;top:153.51px;font-size:8.4px;font-weight:bold;color:#102038;transform:scaleX(0.86);transform-origin:left center;">Total</div>
<div class="t" style="left:23.80px;top:164.09px;font-size:8.4px;font-weight:normal;color:#000;transform:scaleX(0.8749999999999999);transform-origin:left center;-webkit-text-stroke:0.12px #000">Anderson,Jane</div>
<div class="t" style="left:-170.00px;width:300px;text-align:right;top:164.09px;font-size:8.4px;font-weight:normal;color:#000;transform:scaleX(0.8749999999999999);transform-origin:right center;-webkit-text-stroke:0.12px #000">8833.4</div>
<div class="t" style="left:23.80px;top:174.66px;font-size:8.4px;font-weight:normal;color:#000;transform:scaleX(0.8749999999999999);transform-origin:left center;-webkit-text-stroke:0.12px #000">Armstrong,Dan</div>
<div class="t" style="left:-170.00px;width:300px;text-align:right;top:174.66px;font-size:8.4px;font-weight:normal;color:#000;transform:scaleX(0.8749999999999999);transform-origin:right center;-webkit-text-stroke:0.12px #000">7880.51</div>
<div class="t" style="left:23.80px;top:185.24px;font-size:8.4px;font-weight:normal;color:#000;transform:scaleX(0.8749999999999999);transform-origin:left center;-webkit-text-stroke:0.12px #000">Ashe,Lucille</div>
<div class="t" style="left:-170.00px;width:300px;text-align:right;top:185.24px;font-size:8.4px;font-weight:normal;color:#000;transform:scaleX(0.8749999999999999);transform-origin:right center;-webkit-text-stroke:0.12px #000">8755.66</div>
<div class="t" style="left:23.80px;top:195.81px;font-size:8.4px;font-weight:normal;color:#000;transform:scaleX(0.8749999999999999);transform-origin:left center;-webkit-text-stroke:0.12px #000">Bell,Stephen</div>
<div class="t" style="left:-170.00px;width:300px;text-align:right;top:195.81px;font-size:8.4px;font-weight:normal;color:#000;transform:scaleX(0.8749999999999999);transform-origin:right center;-webkit-text-stroke:0.12px #000">11649.76</div>
<div class="t" style="left:23.80px;top:206.39px;font-size:8.4px;font-weight:normal;color:#000;transform:scaleX(0.8749999999999999);transform-origin:left center;-webkit-text-stroke:0.12px #000">Bradshaw,John</div>
<div class="t" style="left:-170.00px;width:300px;text-align:right;top:206.39px;font-size:8.4px;font-weight:normal;color:#000;transform:scaleX(0.8749999999999999);transform-origin:right center;-webkit-text-stroke:0.12px #000">9329.37</div>
<div class="t" style="left:23.80px;top:216.96px;font-size:8.4px;font-weight:normal;color:#000;transform:scaleX(0.8749999999999999);transform-origin:left center;-webkit-text-stroke:0.12px #000">Carrey,Julia</div>
<div class="t" style="left:-170.00px;width:300px;text-align:right;top:216.96px;font-size:8.4px;font-weight:normal;color:#000;transform:scaleX(0.8749999999999999);transform-origin:right center;-webkit-text-stroke:0.12px #000">6091.91</div>
<div class="t" style="left:23.80px;top:227.54px;font-size:8.4px;font-weight:normal;color:#000;transform:scaleX(0.8749999999999999);transform-origin:left center;-webkit-text-stroke:0.12px #000">Davis,Charles</div>
<div class="t" style="left:-170.00px;width:300px;text-align:right;top:227.54px;font-size:8.4px;font-weight:normal;color:#000;transform:scaleX(0.8749999999999999);transform-origin:right center;-webkit-text-stroke:0.12px #000">6800.56</div>
<div class="t" style="left:23.80px;top:238.11px;font-size:8.4px;font-weight:normal;color:#000;transform:scaleX(0.8749999999999999);transform-origin:left center;-webkit-text-stroke:0.12px #000">Diamond,Elizabeth</div>
<div class="t" style="left:-170.00px;width:300px;text-align:right;top:238.11px;font-size:8.4px;font-weight:normal;color:#000;transform:scaleX(0.8749999999999999);transform-origin:right center;-webkit-text-stroke:0.12px #000">8965.29</div>
<div class="t" style="left:23.80px;top:248.69px;font-size:8.4px;font-weight:normal;color:#000;transform:scaleX(0.8749999999999999);transform-origin:left center;-webkit-text-stroke:0.12px #000">Goodman,Paul</div>
<div class="t" style="left:-170.00px;width:300px;text-align:right;top:248.69px;font-size:8.4px;font-weight:normal;color:#000;transform:scaleX(0.8749999999999999);transform-origin:right center;-webkit-text-stroke:0.12px #000">9578.01</div>
<div class="t" style="left:23.80px;top:259.26px;font-size:8.4px;font-weight:normal;color:#000;transform:scaleX(0.8749999999999999);transform-origin:left center;-webkit-text-stroke:0.12px #000">Hawking,Alfred</div>
<div class="t" style="left:-170.00px;width:300px;text-align:right;top:259.26px;font-size:8.4px;font-weight:normal;color:#000;transform:scaleX(0.8749999999999999);transform-origin:right center;-webkit-text-stroke:0.12px #000">10946.28</div>
<div class="t" style="left:23.80px;top:269.84px;font-size:8.4px;font-weight:normal;color:#000;transform:scaleX(0.8749999999999999);transform-origin:left center;-webkit-text-stroke:0.12px #000">Hicks,Michael</div>
<div class="t" style="left:-170.00px;width:300px;text-align:right;top:269.84px;font-size:8.4px;font-weight:normal;color:#000;transform:scaleX(0.8749999999999999);transform-origin:right center;-webkit-text-stroke:0.12px #000">7091.1</div>
<div class="t" style="left:23.80px;top:280.41px;font-size:8.4px;font-weight:normal;color:#000;transform:scaleX(0.8749999999999999);transform-origin:left center;-webkit-text-stroke:0.12px #000">Jennings,John</div>
<div class="t" style="left:-170.00px;width:300px;text-align:right;top:280.41px;font-size:8.4px;font-weight:normal;color:#000;transform:scaleX(0.8749999999999999);transform-origin:right center;-webkit-text-stroke:0.12px #000">11190.73</div>
<div class="t" style="left:23.80px;top:290.99px;font-size:8.4px;font-weight:normal;color:#000;transform:scaleX(0.8749999999999999);transform-origin:left center;-webkit-text-stroke:0.12px #000">Lee,Frank</div>
<div class="t" style="left:-170.00px;width:300px;text-align:right;top:290.99px;font-size:8.4px;font-weight:normal;color:#000;transform:scaleX(0.8749999999999999);transform-origin:right center;-webkit-text-stroke:0.12px #000">13488.16</div>
<div class="t" style="left:23.80px;top:301.56px;font-size:8.4px;font-weight:normal;color:#000;transform:scaleX(0.8749999999999999);transform-origin:left center;-webkit-text-stroke:0.12px #000">Manning,Marilyn</div>
<div class="t" style="left:-170.00px;width:300px;text-align:right;top:301.56px;font-size:8.4px;font-weight:normal;color:#000;transform:scaleX(0.8749999999999999);transform-origin:right center;-webkit-text-stroke:0.12px #000">9064.16</div>
<div class="t" style="left:23.80px;top:312.14px;font-size:8.4px;font-weight:normal;color:#000;transform:scaleX(0.8749999999999999);transform-origin:left center;-webkit-text-stroke:0.12px #000">Newhart,Anna</div>
<div class="t" style="left:-170.00px;width:300px;text-align:right;top:312.14px;font-size:8.4px;font-weight:normal;color:#000;transform:scaleX(0.8749999999999999);transform-origin:right center;-webkit-text-stroke:0.12px #000">8937.66</div>
<div class="t" style="left:23.80px;top:322.71px;font-size:8.4px;font-weight:normal;color:#000;transform:scaleX(0.8749999999999999);transform-origin:left center;-webkit-text-stroke:0.12px #000">Putin,Julia</div>
<div class="t" style="left:-170.00px;width:300px;text-align:right;top:322.71px;font-size:8.4px;font-weight:normal;color:#000;transform:scaleX(0.8749999999999999);transform-origin:right center;-webkit-text-stroke:0.12px #000">8590.69</div>
<div class="t" style="left:23.80px;top:333.29px;font-size:8.4px;font-weight:normal;color:#000;transform:scaleX(0.8749999999999999);transform-origin:left center;-webkit-text-stroke:0.12px #000">Richards,Andy</div>
<div class="t" style="left:-170.00px;width:300px;text-align:right;top:333.29px;font-size:8.4px;font-weight:normal;color:#000;transform:scaleX(0.8749999999999999);transform-origin:right center;-webkit-text-stroke:0.12px #000">8302.17</div>
<div class="t" style="left:23.80px;top:343.86px;font-size:8.4px;font-weight:normal;color:#000;transform:scaleX(0.8749999999999999);transform-origin:left center;-webkit-text-stroke:0.12px #000">Sagan,Jessica</div>
<div class="t" style="left:-170.00px;width:300px;text-align:right;top:343.86px;font-size:8.4px;font-weight:normal;color:#000;transform:scaleX(0.8749999999999999);transform-origin:right center;-webkit-text-stroke:0.12px #000">11004.66</div>
<div class="t" style="left:23.80px;top:354.44px;font-size:8.4px;font-weight:normal;color:#000;transform:scaleX(0.8749999999999999);transform-origin:left center;-webkit-text-stroke:0.12px #000">Silverstone,Gloria</div>
<div class="t" style="left:-170.00px;width:300px;text-align:right;top:354.44px;font-size:8.4px;font-weight:normal;color:#000;transform:scaleX(0.8749999999999999);transform-origin:right center;-webkit-text-stroke:0.12px #000">8349.05</div>
<div class="t" style="left:23.80px;top:365.01px;font-size:8.4px;font-weight:normal;color:#000;transform:scaleX(0.8749999999999999);transform-origin:left center;-webkit-text-stroke:0.12px #000">Simpson,Howard</div>
<div class="t" style="left:-170.00px;width:300px;text-align:right;top:365.01px;font-size:8.4px;font-weight:normal;color:#000;transform:scaleX(0.8749999999999999);transform-origin:right center;-webkit-text-stroke:0.12px #000">9370.3</div>
<div class="t" style="left:23.80px;top:375.59px;font-size:8.4px;font-weight:normal;color:#000;transform:scaleX(0.8749999999999999);transform-origin:left center;-webkit-text-stroke:0.12px #000">Simpson,Meryl</div>
<div class="t" style="left:-170.00px;width:300px;text-align:right;top:375.59px;font-size:8.4px;font-weight:normal;color:#000;transform:scaleX(0.8749999999999999);transform-origin:right center;-webkit-text-stroke:0.12px #000">6522.8</div>
<div class="t" style="left:23.80px;top:386.16px;font-size:8.4px;font-weight:normal;color:#000;transform:scaleX(0.8749999999999999);transform-origin:left center;-webkit-text-stroke:0.12px #000">Spears,Julie</div>
<div class="t" style="left:-170.00px;width:300px;text-align:right;top:386.16px;font-size:8.4px;font-weight:normal;color:#000;transform:scaleX(0.8749999999999999);transform-origin:right center;-webkit-text-stroke:0.12px #000">10683.14</div>
<div class="t" style="left:23.80px;top:396.74px;font-size:8.4px;font-weight:normal;color:#000;transform:scaleX(0.8749999999999999);transform-origin:left center;-webkit-text-stroke:0.12px #000">Streep,Margaret</div>
<div class="t" style="left:-170.00px;width:300px;text-align:right;top:396.74px;font-size:8.4px;font-weight:normal;color:#000;transform:scaleX(0.8749999999999999);transform-origin:right center;-webkit-text-stroke:0.12px #000">14513.69</div>
<div class="t" style="left:23.80px;top:407.31px;font-size:8.4px;font-weight:normal;color:#000;transform:scaleX(0.8749999999999999);transform-origin:left center;-webkit-text-stroke:0.12px #000">West,Chuck</div>
<div class="t" style="left:-170.00px;width:300px;text-align:right;top:407.31px;font-size:8.4px;font-weight:normal;color:#000;transform:scaleX(0.8749999999999999);transform-origin:right center;-webkit-text-stroke:0.12px #000">6847.74</div>
<div class="t" style="left:23.80px;top:417.89px;font-size:8.4px;font-weight:bold;color:#102038;transform:scaleX(0.83);transform-origin:left center;">Grand Total</div>
<div class="t" style="left:-170.00px;width:300px;text-align:right;top:417.89px;font-size:8.4px;font-weight:bold;color:#000;transform:scaleX(0.84);transform-origin:right center;">222786.8</div>
<div class="abs" style="left:141.5px;top:205.5px;width:241px;height:163px;background:#fff;border:1px solid #c2c2c2"></div>
<div class="t" style="left:111.50px;width:300px;text-align:center;top:215.67px;font-size:12.2px;font-weight:bold;color:#111;">Total</div>
<svg class="abs" style="left:0;top:0" width="620" height="516"><path d="M222.2,299 L222.20,240.00 A59,59 0 0 1 247.13,245.53 Z" fill="#5499d6"/><path d="M222.2,299 L247.13,245.53 A59,59 0 0 1 268.05,261.87 Z" fill="#f07a2a"/><path d="M222.2,299 L268.05,261.87 A59,59 0 0 1 279.91,286.73 Z" fill="#a3a3a3"/><path d="M222.2,299 L279.91,286.73 A59,59 0 0 1 277.64,319.18 Z" fill="#f5bb00"/><path d="M222.2,299 L277.64,319.18 A59,59 0 0 1 260.91,343.53 Z" fill="#3f6fc8"/><path d="M222.2,299 L260.91,343.53 A59,59 0 0 1 246.20,352.90 Z" fill="#52aa3e"/><path d="M222.2,299 L246.20,352.90 A59,59 0 0 1 222.20,358.00 Z" fill="#4aa8e6"/><path d="M222.2,299 L222.20,358.00 A59,59 0 0 1 200.10,353.70 Z" fill="#ff8518"/><path d="M222.2,299 L200.10,353.70 A59,59 0 0 1 175.08,334.51 Z" fill="#adadad"/><path d="M222.2,299 L175.08,334.51 A59,59 0 0 1 163.28,302.09 Z" fill="#ffcc08"/><path d="M222.2,299 L163.28,302.09 A59,59 0 0 1 164.95,284.73 Z" fill="#4678dc"/><path d="M222.2,299 L164.95,284.73 A59,59 0 0 1 181.96,255.85 Z" fill="#62c04a"/><path d="M222.2,299 L181.96,255.85 A59,59 0 0 1 222.20,240.00 Z" fill="#b4cfeb"/></svg>
<div class="abs" style="left:307.5px;top:244.8px;width:3.2px;height:3.2px;background:#5b9bd5"></div>
<div class="t" style="left:313.60px;top:244.06px;font-size:8.2px;font-weight:normal;color:#262626;transform:scaleX(0.84);transform-origin:left center;-webkit-text-stroke:0.1px #262626">Anderson,Jane</div>
<div class="abs" style="left:307.5px;top:259.9px;width:3.2px;height:3.2px;background:#ed7d31"></div>
<div class="t" style="left:313.60px;top:259.16px;font-size:8.2px;font-weight:normal;color:#262626;transform:scaleX(0.84);transform-origin:left center;-webkit-text-stroke:0.1px #262626">Armstrong,Dan</div>
<div class="abs" style="left:307.5px;top:275.0px;width:3.2px;height:3.2px;background:#a5a5a5"></div>
<div class="t" style="left:313.60px;top:274.26px;font-size:8.2px;font-weight:normal;color:#262626;transform:scaleX(0.84);transform-origin:left center;-webkit-text-stroke:0.1px #262626">Ashe,Lucille</div>
<div class="abs" style="left:307.5px;top:290.1px;width:3.2px;height:3.2px;background:#ffc000"></div>
<div class="t" style="left:313.60px;top:289.36px;font-size:8.2px;font-weight:normal;color:#262626;transform:scaleX(0.84);transform-origin:left center;-webkit-text-stroke:0.1px #262626">Bell,Stephen</div>
<div class="abs" style="left:307.5px;top:305.2px;width:3.2px;height:3.2px;background:#4472c4"></div>
<div class="t" style="left:313.60px;top:304.46px;font-size:8.2px;font-weight:normal;color:#262626;transform:scaleX(0.84);transform-origin:left center;-webkit-text-stroke:0.1px #262626">Bradshaw,John</div>
<div class="abs" style="left:307.5px;top:320.3px;width:3.2px;height:3.2px;background:#70ad47"></div>
<div class="t" style="left:313.60px;top:319.56px;font-size:8.2px;font-weight:normal;color:#262626;transform:scaleX(0.84);transform-origin:left center;-webkit-text-stroke:0.1px #262626">Carrey,Julia</div>
<div class="abs" style="left:307.5px;top:335.4px;width:3.2px;height:3.2px;background:#5bc0e8"></div>
<div class="t" style="left:313.60px;top:334.66px;font-size:8.2px;font-weight:normal;color:#262626;transform:scaleX(0.84);transform-origin:left center;-webkit-text-stroke:0.1px #262626">Davis,Charles</div>
<div class="abs" style="left:307.5px;top:350.5px;width:3.2px;height:3.2px;background:#f4a46a"></div>
<div class="t" style="left:313.60px;top:349.76px;font-size:8.2px;font-weight:normal;color:#262626;transform:scaleX(0.84);transform-origin:left center;-webkit-text-stroke:0.1px #262626">Diamond,Elizabeth</div>
<div class="abs" style="left:386.5px;top:137.3px;width:224.5px;height:369.0px;background:linear-gradient(#5e5b59 0,#65605c 30px,#6e6660 120px,#6e6660 100%);border-radius:5px;box-shadow:0 2px 6px rgba(0,0,0,.35);overflow:hidden"><div class="abs" style="left:0;top:0;width:100%;height:14.1px;background:linear-gradient(#4a4846,#3c3a38)"></div></div>
<div class="abs" style="left:390px;top:140px;width:10px;height:10px;border-radius:50%;background:#d4d4d4"></div>
<svg class="abs" style="left:390px;top:140px" width="10" height="10"><path d="M3 3L7 7M7 3L3 7" stroke="#4a4644" stroke-width="1.6"/></svg>
<div class="t" style="left:349.00px;width:300px;text-align:center;top:140.18px;font-size:9px;font-weight:normal;color:#a29d98;">PivotTable Builder</div>
<div class="abs" style="left:520.5px;top:157.3px;width:80px;height:10.5px;border-radius:6px;background:linear-gradient(#7c7773,#8c8782);border:1px solid #6a6561"></div>
<svg class="abs" style="left:523px;top:158.5px" width="10" height="10"><circle cx="3.8" cy="3.8" r="2.2" stroke="#e8e8e8" stroke-width="1.1" fill="none"/><path d="M5.5 5.5L7.8 7.8" stroke="#e8e8e8" stroke-width="1.3"/></svg>
<div class="t" style="left:532.60px;top:157.92px;font-size:8.6px;font-weight:normal;color:#5f5a56;-webkit-text-stroke:0.2px #5f5a56">Search fields</div>
<div class="t" style="left:394.00px;top:178.08px;font-size:10.3px;font-weight:normal;color:#f6f6f6;-webkit-text-stroke:0.25px #f6f6f6">Field name</div>
<div class="abs" style="left:395px;top:190px;width:208px;height:73px;background:#3b3a39;border-top:1px solid #262626"></div>
<div class="abs" style="left:591px;top:191px;width:11px;height:71px;background:#2e2e2e"></div>
<div class="abs" style="left:593px;top:192px;width:6px;height:38px;border-radius:3px;background:#5c5c5c"></div>
<div class="abs" style="left:400.8px;top:193.7px;width:8.4px;height:8.4px;border-radius:1.5px;background:linear-gradient(#5a5a5a,#444);border:1px solid #2c2c2c;box-shadow:inset 0 1px 0 #707070"></div>
<div class="t" style="left:419.20px;top:192.20px;font-size:9.8px;font-weight:normal;color:#f8f8f8;-webkit-text-stroke:0.12px #f8f8f8">Order</div>
<div class="abs" style="left:400.8px;top:208.7px;width:8.4px;height:8.4px;border-radius:1.5px;background:linear-gradient(#5a5a5a,#444);border:1px solid #2c2c2c;box-shadow:inset 0 1px 0 #707070"></div>
<div class="t" style="left:419.20px;top:207.20px;font-size:9.8px;font-weight:normal;color:#f8f8f8;-webkit-text-stroke:0.12px #f8f8f8">Order</div>
<div class="abs" style="left:400.8px;top:223.7px;width:8.4px;height:8.4px;border-radius:1.5px;background:linear-gradient(#5a5a5a,#444);border:1px solid #2c2c2c;box-shadow:inset 0 1px 0 #707070"></div>
<div class="t" style="left:419.20px;top:222.20px;font-size:9.8px;font-weight:normal;color:#f8f8f8;-webkit-text-stroke:0.12px #f8f8f8">Customer</div>
<div class="abs" style="left:400.8px;top:238.7px;width:8.4px;height:8.4px;border-radius:1.5px;background:linear-gradient(#5a5a5a,#444);border:1px solid #2c2c2c;box-shadow:inset 0 1px 0 #707070"></div>
<div class="t" style="left:419.20px;top:237.20px;font-size:9.8px;font-weight:normal;color:#f8f8f8;-webkit-text-stroke:0.12px #f8f8f8">Employee</div>
<div class="abs" style="left:400.8px;top:253.7px;width:8.4px;height:8.4px;border-radius:1.5px;background:linear-gradient(#5a5a5a,#444);border:1px solid #2c2c2c;box-shadow:inset 0 1px 0 #707070"></div>
<div class="t" style="left:419.20px;top:252.20px;font-size:9.8px;font-weight:normal;color:#f8f8f8;-webkit-text-stroke:0.12px #f8f8f8">Title</div>
<svg class="abs" style="left:400.5px;top:238.5px" width="10" height="10"><path d="M2.5 5L4.3 7.5L7.8 2.5" stroke="#cfcfcf" stroke-width="1.2" fill="none"/></svg>
<div class="abs" style="left:498px;top:266px;width:4px;height:4px;border-radius:50%;background:#8a847f"></div>
<div class="t" style="left:351.00px;width:300px;text-align:center;top:278.40px;font-size:10.4px;font-weight:normal;color:#f4f4f4;-webkit-text-stroke:0.2px #f4f4f4">Drag fields between areas</div>
<div class="t" style="left:416.00px;top:298.87px;font-size:10.2px;font-weight:normal;color:#f4f4f4;-webkit-text-stroke:0.2px #f4f4f4">Report Filter</div>
<div class="t" style="left:522.00px;top:298.70px;font-size:10.4px;font-weight:normal;color:#f4f4f4;-webkit-text-stroke:0.2px #f4f4f4">Column Labels</div>
<div class="t" style="left:416.00px;top:396.87px;font-size:10.2px;font-weight:normal;color:#f4f4f4;-webkit-text-stroke:0.2px #f4f4f4">Row Labels</div>
<div class="t" style="left:521.00px;top:396.87px;font-size:10.2px;font-weight:normal;color:#f4f4f4;-webkit-text-stroke:0.2px #f4f4f4">Values</div>
<div class="abs" style="left:397px;top:312px;width:102px;height:77px;background:#3b3a39;border-top:1px solid #262626"></div>
<div class="abs" style="left:502px;top:312px;width:101px;height:77px;background:#3b3a39;border-top:1px solid #262626"></div>
<div class="abs" style="left:397px;top:411px;width:102px;height:78px;background:#3b3a39;border-top:1px solid #262626"></div>
<div class="abs" style="left:502px;top:411px;width:101px;height:78px;background:#3b3a39;border-top:1px solid #262626"></div>
<div class="abs" style="left:398.5px;top:411.5px;width:97.5px;height:13.5px;border-radius:3px;background:linear-gradient(#5e5d5c,#4a4948);border:1px solid #262626;box-shadow:inset 0 1px 0 #6e6d6c"></div>
<div class="t" style="left:414.00px;top:413.56px;font-size:9.5px;font-weight:normal;color:#f8f8f8;-webkit-text-stroke:0.2px #f8f8f8">Employee</div>
<svg class="abs" style="left:398.5px;top:411px" width="97.5" height="14"><g fill="#8a8a8a"><circle cx="6" cy="5" r=".8"/><circle cx="9" cy="5" r=".8"/><circle cx="6" cy="8.5" r=".8"/><circle cx="9" cy="8.5" r=".8"/></g><circle cx="87.5" cy="7.3" r="5" fill="#3e3e3e" stroke="#6a6a6a" stroke-width=".8"/><path d="M85.0 5.5c0-2 4-2.5 4.5-0.5c0.3 1.2-1.5 1.8-2 4" stroke="#e8e8e8" stroke-width="1.3" fill="none"/></svg>
<div class="abs" style="left:504px;top:411.5px;width:96px;height:13.5px;border-radius:3px;background:linear-gradient(#5e5d5c,#4a4948);border:1px solid #262626;box-shadow:inset 0 1px 0 #6e6d6c"></div>
<div class="t" style="left:518.00px;top:413.56px;font-size:9.5px;font-weight:normal;color:#f8f8f8;-webkit-text-stroke:0.2px #f8f8f8">Sum of Total</div>
<svg class="abs" style="left:504px;top:411px" width="96" height="14"><g fill="#8a8a8a"><circle cx="6" cy="5" r=".8"/><circle cx="9" cy="5" r=".8"/><circle cx="6" cy="8.5" r=".8"/><circle cx="9" cy="8.5" r=".8"/></g><circle cx="86" cy="7.3" r="5" fill="#3e3e3e" stroke="#6a6a6a" stroke-width=".8"/><path d="M83.5 5.5c0-2 4-2.5 4.5-0.5c0.3 1.2-1.5 1.8-2 4" stroke="#e8e8e8" stroke-width="1.3" fill="none"/></svg>
<svg class="abs" style="left:395px;top:292px" width="130" height="120" viewBox="395 292 130 120">
<ellipse cx="401.8" cy="302" rx="2" ry="1.8" fill="#eeeeee"/><ellipse cx="405.6" cy="302" rx="2" ry="1.8" fill="#d8d8d8"/>
<path d="M403.7 303.5v5" stroke="#c8c8c8" stroke-width="1.1"/>
<rect x="504" y="298" width="13" height="11.5" fill="#6c78d8"/>
<path d="M504 300h13M504 302.5h13M504 305h13M504 307.5h13" stroke="#e8ecff" stroke-width="1.1"/>
<path d="M508 298v11.5M512.5 298v11.5" stroke="#9aa4ff" stroke-width=".8"/>
<rect x="399.5" y="395.5" width="11.5" height="10.5" fill="#1f8f78"/>
<path d="M399.5 397.5h11.5M399.5 400.5h11.5M399.5 403.5h11.5" stroke="#bff5e2" stroke-width="1"/>
<path d="M403.5 395.5v10.5M407 395.5v10.5" stroke="#7fd8c0" stroke-width=".8"/>
<rect x="399.5" y="395.5" width="2.5" height="10.5" fill="#d8fff0"/>
<rect x="505.5" y="395" width="6.5" height="12.5" rx="1" fill="#3a78c8"/>
<rect x="506.5" y="396" width="4.5" height="4" fill="#8ac2f0"/>
<rect x="506.5" y="401.5" width="4.5" height="4.5" fill="#5a9ee0"/>
</svg>
</body></html>
